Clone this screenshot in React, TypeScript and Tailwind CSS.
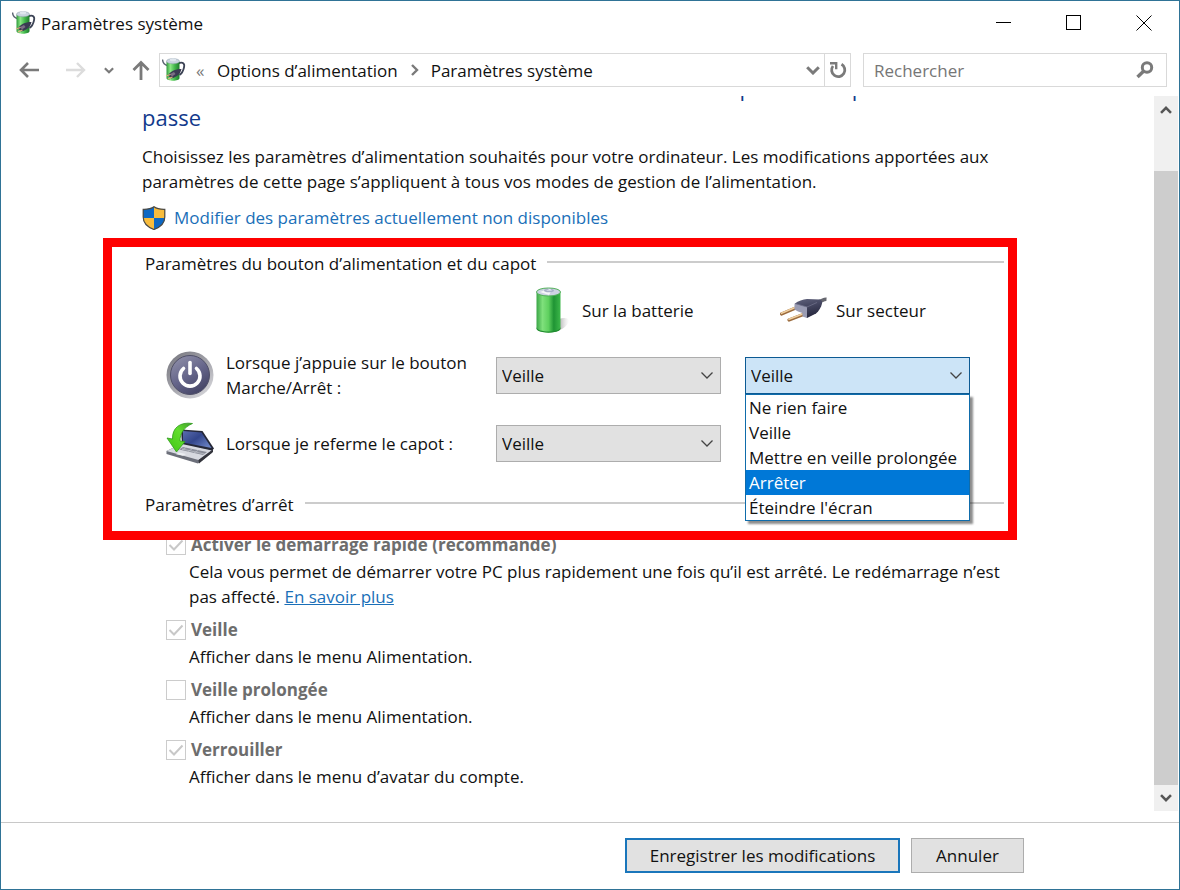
import { useState } from 'react'
import type { ReactNode } from 'react'

const CHOICES = [
  'Ne rien faire',
  'Veille',
  'Mettre en veille prolongée',
  'Arrêter',
  "Éteindre l'écran",
]

function PowerOptionsIcon({ id }: { id: string }) {
  return (
    <svg className="w-6 h-6 shrink-0" viewBox="0 0 24 24" fill="none" aria-hidden="true">
      <defs>
        <linearGradient id={id} x1="0" x2="1" y1="0" y2="0">
          <stop offset="0" stopColor="#2f9a3c" />
          <stop offset="0.3" stopColor="#8be884" />
          <stop offset="0.65" stopColor="#3fb549" />
          <stop offset="1" stopColor="#1f7a2c" />
        </linearGradient>
      </defs>
      <path d="M0.5 1.5c0.3 3 1.6 5 4.5 6" stroke="#5a6472" strokeWidth="1.5" />
      <path d="M16 5.5c5-2 7 0 6 4-0.8 3.5-2 6-4.5 7.5" stroke="#3c4355" strokeWidth="1.8" />
      <path d="M4.5 3.5v16.5c0 3.600 13 3.600 13 0V3.500z" fill={`url(#${id})`} />
      <ellipse cx="11" cy="3.2" rx="6.5" ry="2.6" fill="#c9d3de" stroke="#8d9aa8" strokeWidth="0.5" />
      <ellipse cx="11" cy="1.8" rx="3.2" ry="1.5" fill="#dfe6ed" />
      <path d="M6 17.500c2-4 7-6.500 13.500-6.500-1 5-5 8.500-10.500 9.500z" fill="#3a3b52" />
      <path d="M8 16l4-2 1.500 2-3.500 2.500z" fill="#7c6f86" />
      <path d="M8.500 16.500l-4.500 1.500M10.500 19l-4.500 1.800" stroke="#d9b27a" strokeWidth="1.300" />
    </svg>
  )
}

function BatteryIcon() {
  return (
    <svg className="w-12 h-12 shrink-0" viewBox="0 0 48 48" fill="none" aria-hidden="true">
      <defs>
        <linearGradient id="cell" x1="0" x2="1" y1="0" y2="0">
          <stop offset="0" stopColor="#3aa646" />
          <stop offset="0.25" stopColor="#7fe07c" />
          <stop offset="0.5" stopColor="#5fd05f" />
          <stop offset="0.72" stopColor="#1f9434" />
          <stop offset="1" stopColor="#3db84a" />
        </linearGradient>
        <linearGradient id="cellShadow" x1="0" x2="1" y1="0" y2="0">
          <stop offset="0" stopColor="#6b6b6b" stopOpacity="0.7" />
          <stop offset="1" stopColor="#bbbbbb" stopOpacity="0" />
        </linearGradient>
      </defs>
      <path d="M33 33c5-2 9-1 10 1s-4 9-12 11z" fill="url(#cellShadow)" />
      <path d="M10.500 6v36c0 6 24 6 24 0V6z" fill="url(#cell)" />
      <path d="M10.500 41c0 6 24 6 24 0v1.500c0 5.500-24 5.500-24 0z" fill="#218a30" />
      <ellipse cx="22.500" cy="6" rx="12" ry="4" fill="#cdd3e2" stroke="#4fae58" strokeWidth="1" />
      <path d="M14 6l8-3 4 1-3 5z" fill="#ffffff" fillOpacity="0.8" />
      <ellipse cx="23" cy="4.500" rx="5" ry="1.800" fill="#a9b0c9" />
      <path d="M20 4.500l4-1.500 2 1.500z" fill="#f3f5fa" />
    </svg>
  )
}

function PlugIcon() {
  return (
    <svg className="w-12 h-12 shrink-0" viewBox="0 0 48 48" fill="none" aria-hidden="true">
      <defs>
        <linearGradient id="plug" x1="0.3" x2="0.6" y1="0" y2="1">
          <stop offset="0" stopColor="#5c5e78" />
          <stop offset="0.4" stopColor="#43455f" />
          <stop offset="1" stopColor="#23243a" />
        </linearGradient>
      </defs>
      <path d="M39 15.500c3-0.500 4.500-2.500 7.500-2.300" stroke="#66676f" strokeWidth="3.500" />
      <path d="M1.500 28l13-5.500M9 34l13-5" stroke="#9b6b3d" strokeWidth="3.200" strokeLinecap="round" />
      <path d="M1.500 27.300l13-5.500M9 33.300l13-5" stroke="#f0cf9f" strokeWidth="1.600" strokeLinecap="round" />
      <path d="M15 17.500c3-2.500 8-4 12-4.500l13 0.500c1.500 0.500 2.500 2 2 4-1 4-3 7.500-6 10L27 32z" fill="url(#plug)" />
      <path d="M14.500 17.500l12.500 3.500v11l-4.500-1.500v-3.500l-4.500-1.500-3.500-2z" fill="#9a9cb3" />
      <path d="M15 17.500l12 3.500 10-4.500" stroke="#6e7089" strokeWidth="0.800" />
    </svg>
  )
}

function PowerButtonIcon() {
  return (
    <svg className="w-12 h-12 shrink-0" viewBox="0 0 48 48" fill="none" aria-hidden="true">
      <defs>
        <linearGradient id="rim" x1="0.1" x2="0.9" y1="0" y2="1">
          <stop offset="0" stopColor="#77777f" />
          <stop offset="0.5" stopColor="#a3a3aa" />
          <stop offset="1" stopColor="#dcdce0" />
        </linearGradient>
        <linearGradient id="face" x1="0.2" x2="0.8" y1="0" y2="1">
          <stop offset="0" stopColor="#8e8ea8" />
          <stop offset="0.5" stopColor="#65658a" />
          <stop offset="1" stopColor="#404061" />
        </linearGradient>
      </defs>
      <circle cx="24" cy="24" r="23.500" fill="url(#rim)" />
      <circle cx="24" cy="24" r="19.500" fill="url(#face)" stroke="#505068" strokeWidth="1" />
      <path d="M17.500 17.500a10 10 0 1 0 13 0" stroke="#ffffff" strokeWidth="3.600" strokeLinecap="round" />
      <path d="M24 11.500v11" stroke="#ffffff" strokeWidth="3.600" strokeLinecap="round" />
    </svg>
  )
}

function LidIcon() {
  return (
    <svg className="w-12 h-12 shrink-0" viewBox="0 0 48 48" fill="none" aria-hidden="true">
      <defs>
        <linearGradient id="screen" x1="0" x2="1" y1="0" y2="0.8">
          <stop offset="0" stopColor="#5a6cae" />
          <stop offset="0.5" stopColor="#33468c" />
          <stop offset="1" stopColor="#6a82c4" />
        </linearGradient>
        <linearGradient id="arrow" x1="0" x2="1" y1="1" y2="0">
          <stop offset="0" stopColor="#3fc414" />
          <stop offset="0.6" stopColor="#62de2e" />
          <stop offset="1" stopColor="#3f9a2a" />
        </linearGradient>
      </defs>
      <path d="M0.500 32l16.500-8 30 6-1.500 4-13.500 10.500L0.500 35z" fill="#6c6f7a" />
      <path d="M0.500 32l16.500-7.500 29 6.500-13.500 10z" fill="#d7d9e0" />
      <path d="M17 28l24 5-4 3-24-5.500z" fill="#8a8d99" />
      <path d="M16 30l22.500 5M20 28.500l-4 2.500M26 30l-4 2.500M32 31.500l-4 2.500" stroke="#c9ccd4" strokeWidth="0.600" />
      <path d="M13 33.500l7 1.500-3 1.800-7-1.600z" fill="#eceef2" />
      <path d="M32.500 41L47 30.500V33l-14 11.500z" fill="#33343c" />
      <path d="M15 10.500l21.500 1.500L48 29.500l-2 2-30-6.500z" fill="#252838" />
      <path d="M17 12l18.500 1.500L45.500 29 17 23.500z" fill="url(#screen)" />
      <path d="M26.500 4.500C14 2.500 6 9 6.500 20L1 19l9.500 14L19 22.500l-5 -0.500C14 14.500 17.500 8.500 26.500 4.500z" fill="url(#arrow)" stroke="#2f9a1c" strokeWidth="0.800" />
    </svg>
  )
}

function ShieldIcon() {
  return (
    <svg className="w-6 h-6 shrink-0" viewBox="0 0 24 24" aria-hidden="true">
      <path d="M12 0.500C9.500 2.500 5 3.300 1 3.200V11c0 6 5 10.500 11 12.800z" fill="#0d68c4" />
      <path d="M12 0.500c2.500 2 7 2.800 11 2.700V11c0 6-5 10.500-11 12.800z" fill="#f8bc3c" />
      <path d="M1 12h11v11.800C6 21.500 1.500 17.500 1 12z" fill="#f8bc3c" />
      <path d="M23 12H12v11.800c6-2.300 10.500-6.300 11-11.800z" fill="#0d68c4" />
      <path d="M12 0.800C9.500 2.600 5 3.400 1.200 3.300V11c0 6 4.800 10.300 10.800 12.500C18 21.300 22.800 17 22.800 11V3.300C19 3.400 14.500 2.600 12 0.800z" fill="none" stroke="#4b4a45" strokeWidth="1.200" />
    </svg>
  )
}

function Chevron({ className }: { className: string }) {
  return (
    <svg className={className} viewBox="0 0 12 7" fill="none" stroke="currentColor" strokeWidth={1.3} aria-hidden="true">
      <path d="M0.500 0.500L6 6l5.500-5.500" />
    </svg>
  )
}

function BoldChevron({ className }: { className: string }) {
  return (
    <svg className={className} viewBox="0 0 14 9" fill="none" stroke="currentColor" strokeWidth={3} aria-hidden="true">
      <path d="M1.200 1.200L7 7l5.800-5.800" />
    </svg>
  )
}

interface PickerProps {
  label: string
  value: string
  onChange: (value: string) => void
  open?: boolean
}

function Picker({ label, value, onChange, open }: PickerProps) {
  return (
    <div className="relative w-[225px]">
      <select
        aria-label={label}
        value={value}
        onChange={(e) => onChange(e.target.value)}
        className={`block w-full h-[37px] appearance-none border pl-[5px] pr-8 outline-none ${
          open ? 'border-[#0c5a93] bg-[#cce4f7]' : 'border-[#adadad] bg-[#e1e1e1]'
        }`}
      >
        {CHOICES.map((c) => (
          <option key={c}>{c}</option>
        ))}
      </select>
      <Chevron className="pointer-events-none absolute right-2 top-[15px] w-3 h-[7px] text-[#444]" />
      {open && (
        <ul
          role="listbox"
          aria-label={label}
          className="absolute left-0 top-full z-20 w-full border border-[#0f6cab] bg-white shadow-[3px_3px_2px_rgba(0,0,0,0.45)]"
        >
          {CHOICES.map((c) => (
            <li
              key={c}
              role="option"
              aria-selected={c === 'Arrêter'}
              className={`whitespace-nowrap px-[3px] ${c === 'Arrêter' ? 'bg-[#0078d7] text-white' : ''}`}
            >
              {c}
            </li>
          ))}
        </ul>
      )}
    </div>
  )
}

function GroupTitle({ children }: { children: ReactNode }) {
  return (
    <h2 className="flex items-center gap-[11px]">
      {children}
      <span className="mb-1 h-[2px] flex-1 bg-[#cccccc]" />
    </h2>
  )
}

interface OptionProps {
  id: string
  title: string
  checked: boolean
  children: ReactNode
}

function ShutdownOption({ id, title, checked, children }: OptionProps) {
  return (
    <div>
      <div className="flex items-center gap-[5px]">
        <span className="relative block w-5 h-5">
          <input
            id={id}
            type="checkbox"
            checked={checked}
            disabled
            readOnly
            className="block w-5 h-5 appearance-none border border-[#cccccc] bg-white"
          />
          {checked && (
            <svg className="pointer-events-none absolute inset-0 w-5 h-5" viewBox="0 0 20 20" fill="none" stroke="#c8c8c8" strokeWidth={2} aria-hidden="true">
              <path d="M3.500 10l4.500 4.500 8.500-9" />
            </svg>
          )}
        </span>
        <label htmlFor={id} className="font-bold text-[#6d6d6d]">
          {title}
        </label>
      </div>
      <p className="mt-[2px] pl-[23px]">{children}</p>
    </div>
  )
}

export default function App() {
  const [powerBattery, setPowerBattery] = useState('Veille')
  const [powerMains, setPowerMains] = useState('Veille')
  const [lidBattery, setLidBattery] = useState('Veille')

  return (
    <div className="flex min-h-screen flex-col border border-[#2f7396] bg-white font-['Open_Sans','Noto_Sans',sans-serif] text-[17px] leading-[25px] text-[#111]">
      {/* Title bar */}
      <header className="flex h-11 items-center justify-between pl-[11px] pr-[27px]">
        <div className="flex items-center gap-[5px]">
          <PowerOptionsIcon id="titleCell" />
          <h1>Paramètres système</h1>
        </div>
        <div className="flex items-center gap-[54px] text-black">
          <button aria-label="Réduire">
            <svg className="block w-4 h-4" viewBox="0 0 16 16" stroke="currentColor" shapeRendering="crispEdges">
              <path d="M0 7.500h15" />
            </svg>
          </button>
          <button aria-label="Agrandir">
            <svg className="block w-4 h-4" viewBox="0 0 16 16" fill="none" stroke="currentColor" shapeRendering="crispEdges">
              <path d="M0.500 0.500h14v14h-14z" />
            </svg>
          </button>
          <button aria-label="Fermer">
            <svg className="block w-4 h-4" viewBox="0 0 16 16" fill="none" stroke="currentColor">
              <path d="M0.500 0.500l15 15M15.500 0.500l-15 15" />
            </svg>
          </button>
        </div>
      </header>

      {/* Navigation */}
      <nav className="flex items-center pl-[18px] pr-3 pt-2 pb-[9px] text-[#7a7a7a]">
        <button aria-label="Précédent">
          <svg className="block w-5 h-[18px]" viewBox="0 0 20 18" fill="none" stroke="currentColor" strokeWidth={2.6}>
            <path d="M20 9H2.500M9 2L2 9l7 7" />
          </svg>
        </button>
        <button aria-label="Suivant" className="ml-[27px] text-[#dcdcdc]">
          <svg className="block w-5 h-[18px]" viewBox="0 0 20 18" fill="none" stroke="currentColor" strokeWidth={2.4}>
            <path d="M0 9h17.500M11 2l7 7-7 7" />
          </svg>
        </button>
        <button aria-label="Emplacements récents" className="ml-[18px]">
          <BoldChevron className="block w-[10px] h-[7px]" />
        </button>
        <button aria-label="Dossier parent" className="ml-[18px]">
          <svg className="block w-[18px] h-5" viewBox="0 0 18 20" fill="none" stroke="currentColor" strokeWidth={2.8}>
            <path d="M9 20V2.500M1.500 10L9 2.500l7.500 7.500" />
          </svg>
        </button>
        <div className="ml-[9px] flex h-[34px] flex-1 items-center border border-[#d9d9d9] text-[#111]">
          <div className="flex h-full flex-1 items-center pl-[2px]">
            <PowerOptionsIcon id="addressCell" />
            <span className="ml-[10px] w-[21px] text-[#7a7a7a]">«</span>
            <button>Options d’alimentation</button>
            <svg className="mx-3 block w-[9px] h-3" viewBox="0 0 9 12" fill="none" stroke="#7a7a7a" strokeWidth={2.4}>
              <path d="M2 1l5 5-5 5" />
            </svg>
            <button>Paramètres système</button>
          </div>
          <button aria-label="Historique" className="mr-1 text-[#7a7a7a]">
            <BoldChevron className="block w-[14px] h-[9px]" />
          </button>
          <button aria-label="Actualiser" className="flex h-full w-[26px] items-center justify-center border-l border-[#d9d9d9] text-[#7a7a7a]">
            <svg className="block w-[18px] h-[18px]" viewBox="0 0 18 18" fill="none" stroke="currentColor" strokeWidth={2.8}>
              <path d="M12.500 3.300A6.600 6.600 0 1 1 4 5" />
              <path d="M1 2.200h6.200v6" strokeWidth={2.4} />
            </svg>
          </button>
        </div>
        <div className="ml-3 flex h-[34px] w-[304px] items-center border border-[#d9d9d9] pl-[10px] pr-3">
          <input
            type="search"
            aria-label="Rechercher"
            placeholder="Rechercher"
            className="min-w-0 flex-1 bg-transparent outline-none placeholder:text-[#767676]"
          />
          <svg className="block w-[18px] h-[18px]" viewBox="0 0 18 18" fill="none" stroke="currentColor" aria-hidden="true">
            <circle cx="11" cy="6.500" r="4.700" strokeWidth="3" />
            <path d="M7.800 10L1.500 16" strokeWidth="3.400" />
          </svg>
        </div>
      </nav>

      <div className="flex flex-1">
        <main className="flex-1 overflow-hidden pb-8 pl-[102px]">
          <div className="w-full max-w-[914px]">
            <div className="pl-[39px]">
              <p className="-mt-6 text-[22px] leading-[30px] text-[#123a8c]">
                Définir les actions des boutons d’alimentation et activer la protection par mot de
                <br />
                passe
              </p>
              <p className="mt-3">
                Choisissez les paramètres d’alimentation souhaités pour votre ordinateur. Les modifications apportées aux
                paramètres de cette page s’appliquent à tous vos modes de gestion de l’alimentation.
              </p>
              <a href="#" className="mt-[11px] flex w-fit items-center gap-2 text-[#1a6fb8]">
                <ShieldIcon />
                Modifier des paramètres actuellement non disponibles
              </a>
            </div>

            {/* Highlighted power button and lid settings */}
            <section className="relative z-10 mt-2 border-[9px] border-[#fe0000] pt-1 pb-[14px] pl-[33px] pr-1">
              <GroupTitle>Paramètres du bouton d’alimentation et du capot</GroupTitle>
              <div className="mt-[10px] grid grid-cols-[330px_225px_225px] gap-x-6 pl-[21px]">
                <div className="col-start-2 flex items-center gap-2 pl-[6px]">
                  <BatteryIcon />
                  Sur la batterie
                </div>
                <div className="flex items-center gap-2 pl-[11px]">
                  <PlugIcon />
                  Sur secteur
                </div>
              </div>
              <div className="mt-4 grid grid-cols-[306px_225px_225px] auto-rows-[50px] items-center gap-x-6 gap-y-[18px] pl-[21px]">
                <div className="flex items-center gap-3">
                  <PowerButtonIcon />
                  <span>
                    Lorsque j’appuie sur le bouton Marche/Arrêt :
                  </span>
                </div>
                <Picker label="Bouton Marche/Arrêt, sur la batterie" value={powerBattery} onChange={setPowerBattery} />
                <Picker label="Bouton Marche/Arrêt, sur secteur" value={powerMains} onChange={setPowerMains} open />
                <div className="flex items-center gap-3">
                  <LidIcon />
                  <span>Lorsque je referme le capot :</span>
                </div>
                <Picker label="Capot, sur la batterie" value={lidBattery} onChange={setLidBattery} />
              </div>
              <div className="mt-6">
                <GroupTitle>Paramètres d’arrêt</GroupTitle>
              </div>
            </section>

            <section className="-mt-2 flex flex-col gap-2 pl-[63px]">
              <ShutdownOption id="fast" title="Activer le démarrage rapide (recommandé)" checked>
                Cela vous permet de démarrer votre PC plus rapidement une fois qu’il est arrêté. Le redémarrage n’est pas
                affecté.{' '}
                <a href="#" className="text-[#1a6fb8] underline">
                  En savoir plus
                </a>
              </ShutdownOption>
              <ShutdownOption id="sleep" title="Veille" checked>
                Afficher dans le menu Alimentation.
              </ShutdownOption>
              <ShutdownOption id="hibernate" title="Veille prolongée" checked={false}>
                Afficher dans le menu Alimentation.
              </ShutdownOption>
              <ShutdownOption id="lock" title="Verrouiller" checked>
                Afficher dans le menu d’avatar du compte.
              </ShutdownOption>
            </section>
          </div>
        </main>

        {/* Scrollbar */}
        <div className="mb-[11px] mr-px flex w-6 flex-col bg-[#f0f0f0] text-[#555]">
          <button aria-label="Défiler vers le haut" className="flex h-[27px] items-center justify-center">
            <BoldChevron className="block w-3 h-2 rotate-180" />
          </button>
          <div className="mt-12 flex-1 bg-[#cdcdcd]" />
          <button aria-label="Défiler vers le bas" className="flex h-[26px] items-center justify-center">
            <BoldChevron className="block w-3 h-2" />
          </button>
        </div>
      </div>

      <footer className="flex justify-end gap-[11px] border-t border-[#c8c8c8] pt-[15px] pb-4 pr-[155px]">
        <button className="h-[35px] w-[275px] border-2 border-[#1a76bb] bg-[#e1e1e1]">Enregistrer les modifications</button>
        <button className="h-[35px] w-[113px] border border-[#adadad] bg-[#e1e1e1]">Annuler</button>
      </footer>
    </div>
  )
}
